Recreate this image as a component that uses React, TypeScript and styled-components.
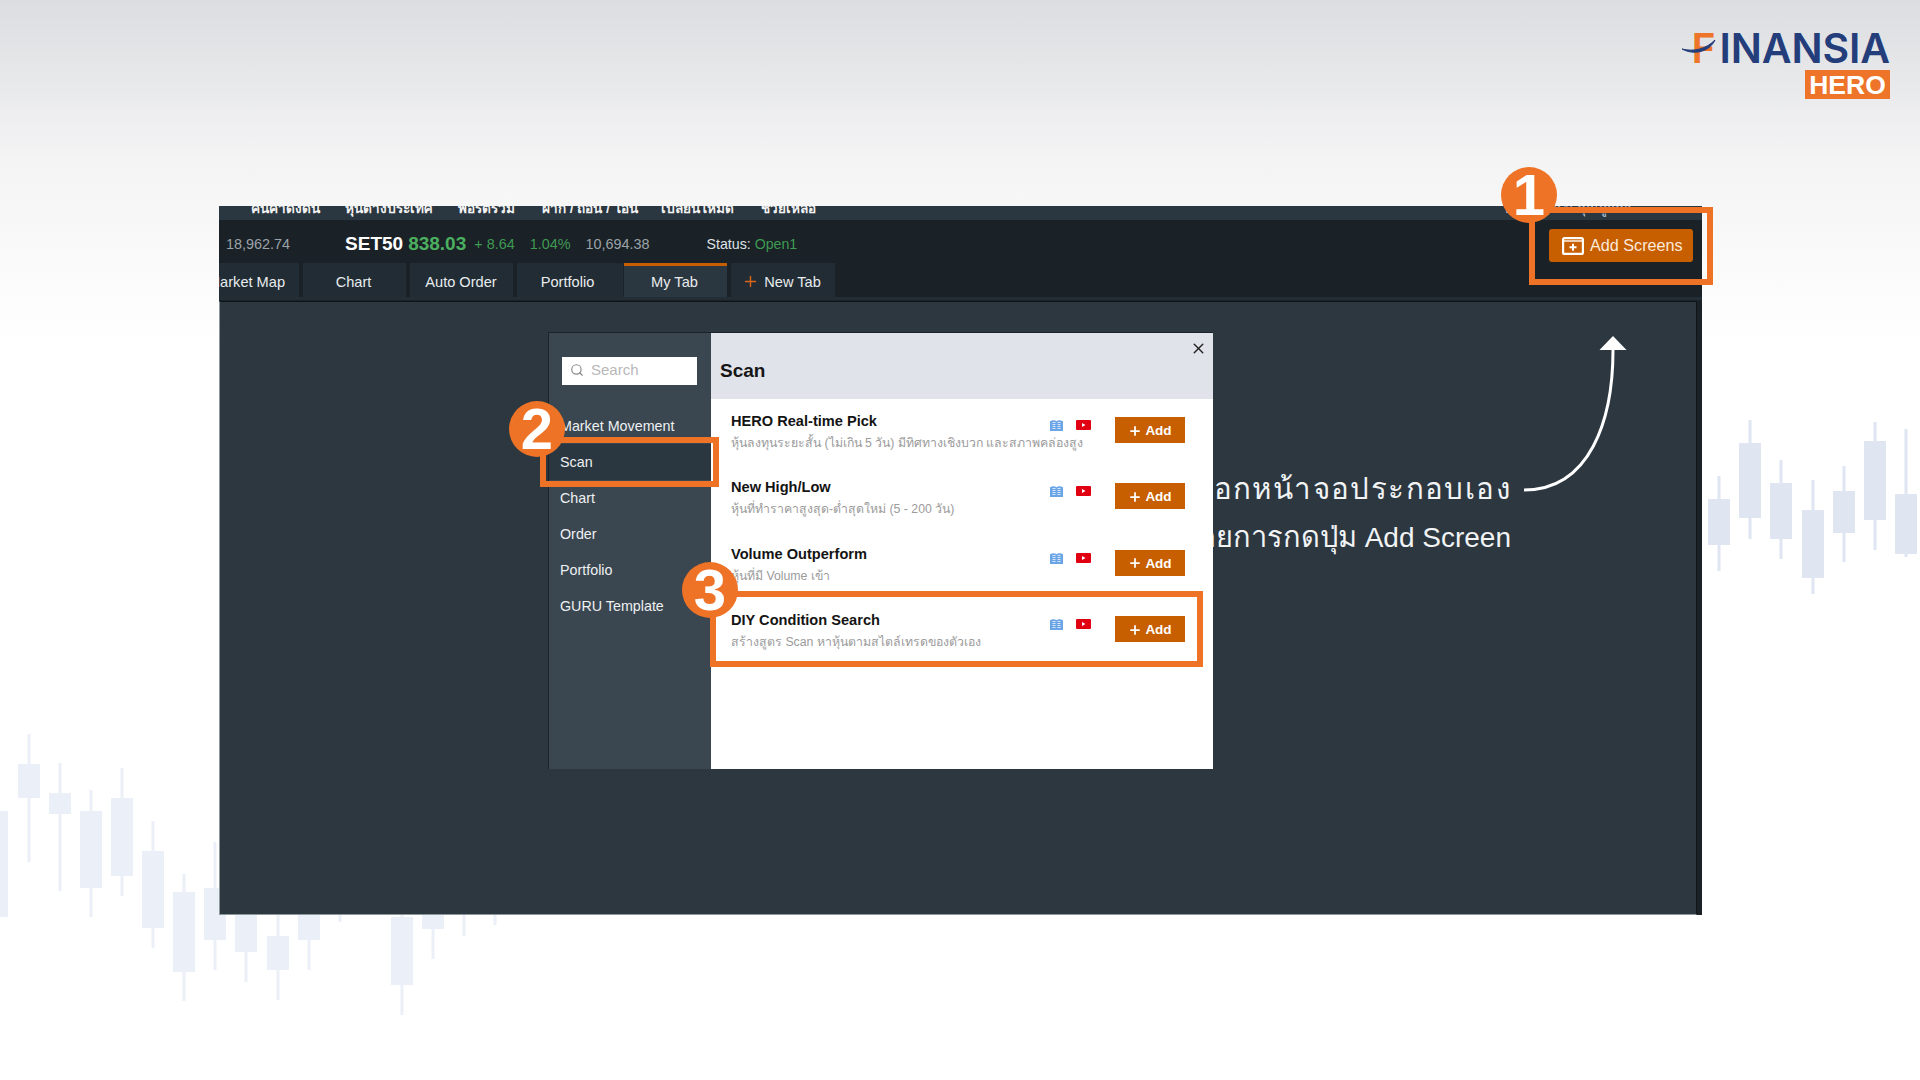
import React from "react";
import styled, { createGlobalStyle } from "styled-components";
import { Search, X, Plus } from "lucide-react";

const Global = createGlobalStyle`
  html, body { margin: 0; padding: 0; background: #fff; }
  body { font-family: "Liberation Sans", Arial, sans-serif; }
`;

const Slide = styled.div`
  position: relative;
  width: 1920px;
  height: 1080px;
  overflow: hidden;
  background: linear-gradient(180deg, #dcdde0 0%, #f4f4f5 15%, #ffffff 32%, #ffffff 100%);
`;

const CandleLayer = styled.svg`
  position: absolute;
  inset: 0;
  width: 1920px;
  height: 1080px;
`;

const TopArea = styled.header`
  position: relative;
  height: 206px;
  display: flex;
  justify-content: flex-end;
  padding: 24px 30px 0 0;
  box-sizing: border-box;
`;

const Logo = styled.div`
  position: relative;
  width: 208px;
  display: flex;
  flex-direction: column;
  align-items: flex-end;
`;

const Wordmark = styled.div`
  font-family: Inter, "Liberation Sans", sans-serif;
  font-size: 41px;
  font-weight: 600;
  line-height: 48px;
  letter-spacing: -0.1px;
  color: #243d7b;
  white-space: nowrap;
`;

const WordF = styled.span`
  color: #ed7428;
  margin-right: 4px;
`;

const Swoosh = styled.svg`
  position: absolute;
  left: 0;
  top: 14px;
`;

const HeroBadge = styled.div`
  margin-top: -2px;
  width: 85px;
  height: 29px;
  background: #ed7428;
  color: #fff;
  font-size: 26.5px;
  line-height: 30px;
  font-weight: 700;
  text-align: center;
`;

const Screen = styled.main`
  position: relative;
  margin-left: 219px;
  width: 1483px;
  height: 709px;
  background: #1a2127;
  display: flex;
  flex-direction: column;
`;

const MenuBar = styled.nav`
  height: 14px;
  background: #2a3640;
  overflow: hidden;
  display: flex;
  color: #f2f2f2;
  font-size: 13.6px;
  font-weight: 700;
  line-height: 14px;
`;

const MenuItem = styled.span<{ $ml: number; $w: number; $dim?: boolean }>`
  margin-left: ${(p) => p.$ml}px;
  width: ${(p) => p.$w}px;
  margin-top: -4px;
  white-space: nowrap;
  flex: none;
  color: ${(p) => (p.$dim ? "#bcd0e2" : "inherit")};
  font-weight: ${(p) => (p.$dim ? 400 : 700)};
`;

const Ticker = styled.div`
  height: 43px;
  display: flex;
  align-items: flex-start;
  padding: 0 9px 0 7px;
`;

const Quote = styled.span<{ $ml?: number; $size?: number; $color?: string; $bold?: boolean }>`
  margin-left: ${(p) => p.$ml ?? 0}px;
  font-size: ${(p) => p.$size ?? 14.4}px;
  font-weight: ${(p) => (p.$bold ? 700 : 400)};
  color: ${(p) => p.$color ?? "#9aa3a8"};
  line-height: 48px;
  white-space: nowrap;
`;

const AddScreens = styled.button`
  margin: 9px 0 0 auto;
  width: 144px;
  height: 33px;
  border: 0;
  border-radius: 3px;
  background: #c75f00;
  color: #fbe9dc;
  font-family: inherit;
  font-size: 16.2px;
  line-height: 35px;
  display: flex;
  align-items: center;
  gap: 6px;
  padding: 0 0 0 13px;
`;

const Tabs = styled.div`
  height: 34px;
  display: flex;
  border-bottom: 3px solid #232d35;
`;

const Tab = styled.div<{ $w: number; $ml: number; $active?: boolean; $pr?: number }>`
  width: ${(p) => p.$w}px;
  margin-left: ${(p) => p.$ml}px;
  padding-right: ${(p) => p.$pr ?? 0}px;
  flex: none;
  box-sizing: border-box;
  background: ${(p) => (p.$active ? "#2b3740" : "#212c35")};
  border-top: 3px solid ${(p) => (p.$active ? "#c75f00" : "#212c35")};
  color: #e9ecee;
  font-size: 14.6px;
  display: flex;
  align-items: center;
  justify-content: center;
  gap: 5px;
  overflow: hidden;
  white-space: nowrap;
`;

const ClippedTab = styled(Tab)`
  justify-content: flex-end;
  padding-right: 14px;
`;

const Content = styled.section`
  flex: 1;
  margin: 1px 5px 0 0;
  background: #2c3740;
  border-left: 1px solid #8d979e;
  border-bottom: 1px solid #8d979e;
  border-top: 1px solid #0f1418;
  border-right: 1px solid #0f1418;
  box-sizing: border-box;
  display: flex;
  align-items: flex-start;
  padding: 30px 0 0 328px;
`;

const Modal = styled.div`
  position: relative;
  z-index: 1;
  flex: none;
  width: 665px;
  height: 437px;
  display: grid;
  grid-template-columns: 162px 1fr;
  border-left: 1px solid #1b2328;
  border-top: 1px solid #1b2328;
  box-sizing: border-box;
`;

const Side = styled.aside`
  background: #3b4750;
  padding-top: 24px;
`;

const SearchBox = styled.div`
  margin: 0 14px 0 13px;
  height: 28px;
  background: #fff;
  display: flex;
  align-items: center;
  gap: 7px;
  padding: 0 0 3px 8px;
  box-sizing: border-box;
  color: #b8b8b8;
  font-size: 15px;
`;

const SideList = styled.div`
  margin-top: 23px;
  display: flex;
  flex-direction: column;
`;

const SideItem = styled.div<{ $active?: boolean }>`
  height: 36px;
  line-height: 36px;
  padding-left: 11px;
  font-size: 14.3px;
  color: #eef0f2;
  background: ${(p) => (p.$active ? "#2b3740" : "transparent")};
`;

const Panel = styled.div`
  background: #fff;
  display: flex;
  flex-direction: column;
`;

const PanelHead = styled.div`
  position: relative;
  height: 66px;
  background: #e0e3ea;
  display: flex;
  align-items: center;
  padding: 10px 0 0 9px;
  box-sizing: border-box;
  font-size: 19px;
  font-weight: 700;
  color: #161616;
`;

const CloseIcon = styled(X)`
  position: absolute;
  right: 6px;
  top: 7px;
`;

const RowList = styled.div`
  padding-top: 8px;
`;

const Row = styled.div`
  height: 66.4px;
  display: flex;
  align-items: flex-start;
  padding: 0 28px 0 20px;
`;

const RowText = styled.div`
  width: 319px;
  flex: none;
  padding-top: 5px;
  white-space: nowrap;
`;

const RowTitle = styled.div`
  font-size: 14.6px;
  font-weight: 700;
  line-height: 18px;
  color: #141414;
`;

const RowSub = styled.div`
  margin-top: 4px;
  font-size: 12.3px;
  line-height: 18px;
  color: #9b9b9b;
`;

const RowIcons = styled.div`
  margin-top: 13px;
  width: 65px;
  flex: none;
  display: flex;
  gap: 13px;
`;

const AddButton = styled.button`
  margin-top: 10px;
  width: 70px;
  height: 26px;
  border: 0;
  background: #c75f00;
  color: #fff;
  font-family: inherit;
  font-size: 13.5px;
  font-weight: 700;
  display: flex;
  align-items: center;
  justify-content: center;
  gap: 3px;
  padding: 1px 0 0;
`;

const Callout = styled.div`
  position: relative;
  z-index: 0;
  flex: none;
  width: 420px;
  margin: 132px 0 0 -122px;
  text-align: right;
  color: #f1f3f4;
  font-family: "Liberation Sans", "Noto Sans", sans-serif;
  font-size: 28px;
  line-height: 49px;
  white-space: nowrap;
`;

const CalloutHead = styled.div`
  font-size: 29.5px;
  letter-spacing: 1.4px;
`;

const CalloutThai = styled.span`
  font-size: 29px;
`;

const CalloutArrow = styled.svg`
  position: absolute;
  left: 1305px;
  top: 130px;
`;

const Frame = styled.div<{ $x: number; $y: number; $w: number; $h: number }>`
  position: absolute;
  left: ${(p) => p.$x}px;
  top: ${(p) => p.$y}px;
  width: ${(p) => p.$w}px;
  height: ${(p) => p.$h}px;
  box-sizing: border-box;
  border: 6px solid #ee7326;
  z-index: 3;
`;

const Badge = styled.div<{ $x: number; $y: number }>`
  position: absolute;
  left: ${(p) => p.$x - 28}px;
  top: ${(p) => p.$y - 28}px;
  width: 56px;
  height: 56px;
  border-radius: 50%;
  background: #ee7326;
  color: #fff;
  font-size: 58px;
  font-weight: 700;
  line-height: 56px;
  text-align: center;
  z-index: 4;
`;

const left: number[][] = [
  [-14, 811, 917, 811, 917],
  [18, 764, 798, 734, 862],
  [49, 793, 814, 763, 891],
  [80, 811, 888, 790, 917],
  [111, 798, 876, 768, 896],
  [142, 851, 928, 821, 948],
  [173, 892, 972, 874, 1001],
  [204, 888, 940, 842, 970],
  [235, 880, 952, 860, 982],
  [267, 936, 970, 900, 1000],
  [298, 880, 940, 860, 970],
  [329, 860, 900, 850, 922],
  [391, 917, 985, 890, 1015],
  [422, 880, 929, 860, 959],
  [453, 880, 915, 860, 936],
  [484, 880, 910, 860, 925],
];

const right: number[][] = [
  [1708, 499, 545, 476, 571],
  [1739, 443, 518, 420, 539],
  [1770, 483, 539, 460, 559],
  [1802, 510, 578, 480, 594],
  [1833, 491, 533, 466, 562],
  [1864, 441, 520, 422, 550],
  [1895, 494, 554, 429, 557],
];

const CandleSet = ({ data, color }: { data: number[][]; color: string }) => (
  <g fill={color}>
    {data.map(([x, t, b, wt, wb]) => (
      <g key={x}>
        <rect x={x + 9.5} y={wt} width={3} height={wb - wt} />
        <rect x={x} y={t} width={22} height={b - t} />
      </g>
    ))}
  </g>
);

const ScreenIcon = () => (
  <svg width="22" height="18" viewBox="0 0 22 18" fill="none">
    <rect x="1.100" y="1.100" width="19.800" height="15.800" rx="1.500" stroke="#fff" strokeWidth="2.200" />
    <path d="M1 4h20" stroke="#fff" strokeWidth="1.400" />
    <path d="M11 6.800v7M7.500 10.300h7" stroke="#fff" strokeWidth="2" />
  </svg>
);

const BookIcon = () => (
  <svg width="13" height="11" viewBox="0 0 13 11">
    <path d="M0 1.200 2 .4c2-.5 3.400 0 4.500.8C7.600.4 9-.1 11 .4l2 .8V11H0Z" fill="#6aa5e8" />
    <path d="M2.500 2.500h3M2.500 4.500h3M2.500 6.500h3M2.500 8.500h3M7.500 2.500h3M7.500 4.500h3M7.500 6.500h3M7.500 8.500h3" stroke="#d6e6f8" strokeWidth="1" />
  </svg>
);

const TubeIcon = () => (
  <svg width="15" height="10" viewBox="0 0 15 10">
    <rect width="15" height="10" rx="1" fill="#e00012" />
    <path d="M6 3l3.500 2L6 7Z" fill="#fff" />
  </svg>
);

const rows = [
  ["HERO Real-time Pick", "หุ้นลงทุนระยะสั้น (ไม่เกิน 5 วัน) มีทิศทางเชิงบวก และสภาพคล่องสูง"],
  ["New High/Low", "หุ้นที่ทำราคาสูงสุด-ต่ำสุดใหม่ (5 - 200 วัน)"],
  ["Volume Outperform", "หุ้นที่มี Volume เข้า"],
  ["DIY Condition Search", "สร้างสูตร Scan หาหุ้นตามสไตล์เทรดของตัวเอง"],
];

const menu: [string, number, number][] = [
  ["คนคาดงดน", 32, 69],
  ["หุ้นต่างประเทศ", 25, 88],
  ["พอร์ตรวม", 25, 60],
  ["ฝาก / ถอน / โอน", 24, 94],
  ["เปลี่ยนโหมด", 25, 75],
  ["ช่วยเหลือ", 25, 47],
];

const side = ["Market Movement", "Scan", "Chart", "Order", "Portfolio", "GURU Template"];

export default function App() {
  return (
    <Slide>
      <Global />
      <CandleLayer viewBox="0 0 1920 1080">
        <CandleSet data={left} color="#ebeff7" />
        <CandleSet data={right} color="#dfe6f1" />
      </CandleLayer>

      <TopArea>
        <Logo>
          <Wordmark>
            <WordF>F</WordF>INANSIA
          </Wordmark>
          <Swoosh width="34" height="16" viewBox="0 0 34 16">
            <path d="M0 11c12 3 24 0 33-9-5 11-20 16-33 9Z" fill="#243d7b" stroke="#243d7b" strokeWidth="1" />
          </Swoosh>
          <HeroBadge>HERO</HeroBadge>
        </Logo>
      </TopArea>

      <Screen>
        <MenuBar>
          {menu.map(([t, ml, w]) => (
            <MenuItem key={t} $ml={ml} $w={w}>
              {t}
            </MenuItem>
          ))}
          <MenuItem $ml={697} $w={120} $dim>
            ยินดีต้อนรับ คุณลูกค้า
          </MenuItem>
        </MenuBar>
        <Ticker>
          <Quote>18,962.74</Quote>
          <Quote $ml={55} $size={19} $color="#fff" $bold>
            SET50
          </Quote>
          <Quote $ml={5} $size={19} $color="#4caf5f" $bold>
            838.03
          </Quote>
          <Quote $ml={8} $size={14.4} $color="#3f9a52">
            + 8.64
          </Quote>
          <Quote $ml={15} $size={14.4} $color="#3f9a52">
            1.04%
          </Quote>
          <Quote $ml={15}>10,694.38</Quote>
          <Quote $ml={57} $size={14.2} $color="#dfe3e6">
            Status: <Quote $size={14.2} $color="#3f9a52">Open1</Quote>
          </Quote>
          <AddScreens>
            <ScreenIcon />
            Add Screens
          </AddScreens>
        </Ticker>
        <Tabs>
          <ClippedTab $w={80} $ml={0}>
            Market Map
          </ClippedTab>
          <Tab $w={103} $ml={4} $pr={2}>Chart</Tab>
          <Tab $w={103} $ml={4} $pr={1}>Auto Order</Tab>
          <Tab $w={106} $ml={4} $pr={5}>Portfolio</Tab>
          <Tab $w={103} $ml={1} $pr={2} $active>My Tab</Tab>
          <Tab $w={104} $ml={4} $pr={3}>
            <Plus size={17} color="#d9661a" strokeWidth={2} />
            New Tab
          </Tab>
        </Tabs>
        <Content>
          <Modal>
            <Side>
              <SearchBox>
                <Search size={14} color="#8a8a8a" />
                Search
              </SearchBox>
              <SideList>
                {side.map((s) => (
                  <SideItem key={s} $active={s === "Scan"}>
                    {s}
                  </SideItem>
                ))}
              </SideList>
            </Side>
            <Panel>
              <PanelHead>
                Scan
                <CloseIcon size={17} color="#222" strokeWidth={2} />
              </PanelHead>
              <RowList>
                {rows.map(([t, s]) => (
                  <Row key={t}>
                    <RowText>
                      <RowTitle>{t}</RowTitle>
                      <RowSub>{s}</RowSub>
                    </RowText>
                    <RowIcons>
                      <BookIcon />
                      <TubeIcon />
                    </RowIcons>
                    <AddButton>
                      <Plus size={14} strokeWidth={3} />
                      Add
                    </AddButton>
                  </Row>
                ))}
              </RowList>
            </Panel>
          </Modal>
          <Callout>
            <CalloutHead>เลือกหน้าจอประกอบเอง</CalloutHead>
            <CalloutThai>โดยการกดปุ่ม</CalloutThai> Add Screen
          </Callout>
        </Content>
        <CalloutArrow width="110" height="160" viewBox="0 0 110 160">
          <path d="M0 154C66 154 89 84 89 14" fill="none" stroke="#fff" strokeWidth="3" />
          <path d="M75.500 14 89 0l13.500 14Z" fill="#fff" />
        </CalloutArrow>
      </Screen>

      <Frame $x={1529} $y={207} $w={184} $h={78} />
      <Frame $x={540} $y={437} $w={179} $h={50} />
      <Frame $x={710} $y={591} $w={493} $h={76} />
      <Badge $x={1529} $y={195}>1</Badge>
      <Badge $x={537} $y={429}>2</Badge>
      <Badge $x={710} $y={590}>3</Badge>
    </Slide>
  );
}
